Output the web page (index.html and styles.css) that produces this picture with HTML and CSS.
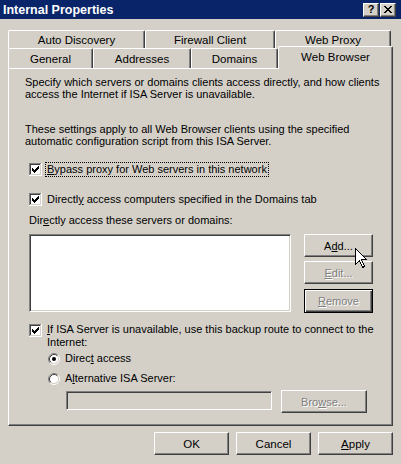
FILE: index.html
```html
<!DOCTYPE html>
<html>
<head>
<meta charset="utf-8">
<link rel="stylesheet" href="styles.css">
</head>
<body>
<div class="window">
  <div class="titlebar">
    <span class="title">Internal Properties</span>
    <div class="tbtns">
      <span class="tbtn help">?</span>
      <span class="tbtn close">
        <svg width="8" height="7" viewBox="0 0 8 7" shape-rendering="crispEdges"><path d="M0 0h2v1h-2zM6 0h2v1h-2zM1 1h2v1h-2zM5 1h2v1h-2zM2 2h4v1h-4zM3 3h2v1h-2zM2 4h4v1h-4zM1 5h2v1h-2zM5 5h2v1h-2zM0 6h2v1h-2zM6 6h2v1h-2z" fill="#000"/></svg>
      </span>
    </div>
  </div>
  <div class="main">
    <div class="tabrow back">
      <div class="tab w-auto">Auto Discovery</div>
      <div class="tab w-fw">Firewall Client</div>
      <div class="tab w-wp">Web Proxy</div>
    </div>
    <div class="tabrow front">
      <div class="tab w-gen">General</div>
      <div class="tab w-addr">Addresses</div>
      <div class="tab w-dom">Domains</div>
      <div class="tab w-wb sel">Web Browser</div>
    </div>
    <div class="panel">
      <p class="para">Specify which servers or domains clients access directly, and how clients<br>access the Internet if ISA Server is unavailable.</p>
      <p class="para para2">These settings apply to all Web Browser clients using the specified<br>automatic configuration script from this ISA Server.</p>
      <div class="check row-c1">
        <svg class="cb" width="13" height="13" viewBox="0 0 13 13" shape-rendering="crispEdges"><rect width="13" height="13" fill="#fff"/><path d="M0 0h12v1h-12zM0 1h1v11h-1z" fill="#808080"/><path d="M1 1h10v1h-10zM1 2h1v9h-1z" fill="#404040"/><path d="M1 11h11v1h-11zM11 1h1v10h-1z" fill="#d4d0c8"/><path d="M9 3h1v1h-1zM8 4h2v1h-2zM3 5h1v1h-1zM7 5h3v1h-3zM3 6h2v1h-2zM6 6h3v1h-3zM3 7h5v1h-5zM4 8h3v1h-3zM5 9h1v1h-1z" fill="#000"/></svg>
        <span class="lbl focus"><u>B</u>ypass proxy for Web servers in this network</span>
      </div>
      <div class="check row-c2">
        <svg class="cb" width="13" height="13" viewBox="0 0 13 13" shape-rendering="crispEdges"><rect width="13" height="13" fill="#fff"/><path d="M0 0h12v1h-12zM0 1h1v11h-1z" fill="#808080"/><path d="M1 1h10v1h-10zM1 2h1v9h-1z" fill="#404040"/><path d="M1 11h11v1h-11zM11 1h1v10h-1z" fill="#d4d0c8"/><path d="M9 3h1v1h-1zM8 4h2v1h-2zM3 5h1v1h-1zM7 5h3v1h-3zM3 6h2v1h-2zM6 6h3v1h-3zM3 7h5v1h-5zM4 8h3v1h-3zM5 9h1v1h-1z" fill="#000"/></svg>
        <span class="lbl">Directl<u>y</u> access computers specified in the Domains tab</span>
      </div>
      <div class="caption">Dir<u>e</u>ctly access these servers or domains:</div>
      <div class="listrow">
        <div class="listbox"></div>
        <div class="btncol">
          <div class="btn btn-add">A<u>d</u>d...</div>
          <div class="btn btn-edit disabled"><u>E</u>dit...</div>
          <div class="btn btn-remove default disabled"><u>R</u>emove</div>
        </div>
      </div>
      <div class="check row-c3">
        <svg class="cb" width="13" height="13" viewBox="0 0 13 13" shape-rendering="crispEdges"><rect width="13" height="13" fill="#fff"/><path d="M0 0h12v1h-12zM0 1h1v11h-1z" fill="#808080"/><path d="M1 1h10v1h-10zM1 2h1v9h-1z" fill="#404040"/><path d="M1 11h11v1h-11zM11 1h1v10h-1z" fill="#d4d0c8"/><path d="M9 3h1v1h-1zM8 4h2v1h-2zM3 5h1v1h-1zM7 5h3v1h-3zM3 6h2v1h-2zM6 6h3v1h-3zM3 7h5v1h-5zM4 8h3v1h-3zM5 9h1v1h-1z" fill="#000"/></svg>
        <span class="lbl"><u>I</u>f ISA Server is unavailable, use this backup route to connect to the<br>Internet:</span>
      </div>
      <div class="radio row-r1">
        <svg class="rb" width="12" height="12" viewBox="0 0 12 12"><circle cx="6" cy="6" r="4.5" fill="#fff"/><path d="M2.11 9.89A5.5 5.5 0 0 1 9.89 2.11" fill="none" stroke="#808080"/><path d="M9.89 2.11A5.5 5.5 0 0 1 2.11 9.89" fill="none" stroke="#fff"/><path d="M2.82 9.18A4.5 4.5 0 0 1 9.18 2.82" fill="none" stroke="#404040"/><path d="M9.18 2.82A4.5 4.5 0 0 1 2.82 9.18" fill="none" stroke="#d4d0c8"/><circle cx="6" cy="6" r="2" fill="#000"/></svg>
        <span class="lbl">Direc<u>t</u> access</span>
      </div>
      <div class="radio row-r2">
        <svg class="rb" width="12" height="12" viewBox="0 0 12 12"><circle cx="6" cy="6" r="4.5" fill="#fff"/><path d="M2.11 9.89A5.5 5.5 0 0 1 9.89 2.11" fill="none" stroke="#808080"/><path d="M9.89 2.11A5.5 5.5 0 0 1 2.11 9.89" fill="none" stroke="#fff"/><path d="M2.82 9.18A4.5 4.5 0 0 1 9.18 2.82" fill="none" stroke="#404040"/><path d="M9.18 2.82A4.5 4.5 0 0 1 2.82 9.18" fill="none" stroke="#d4d0c8"/></svg>
        <span class="lbl">A<u>l</u>ternative ISA Server:</span>
      </div>
      <div class="fieldrow">
        <div class="field"></div>
        <div class="btn btn-browse disabled">Bro<u>w</u>se...</div>
      </div>
    </div>
    <div class="footer">
      <div class="btn fbtn">OK</div>
      <div class="btn fbtn">Cancel</div>
      <div class="btn fbtn"><u>A</u>pply</div>
    </div>
  </div>
  <svg class="cursor" width="13" height="21" viewBox="0 0 13 21" shape-rendering="crispEdges"><path d="M0.5 0.5V16.5L4.5 12.5L7.5 19.5L9.5 18.5L6.5 11.5H11.5Z" fill="#fff" stroke="#000"/></svg>
</div>
</body>
</html>
```
FILE: styles.css
```css
* { box-sizing: border-box; }
body {
  margin: 0;
  background: #d4d0c8;
  font-family: "Liberation Sans", Arial, sans-serif;
  font-size: 11px;
  color: #000;
}
u { text-decoration: underline; text-underline-offset: 1px; }
.window {
  width: 401px;
  height: 464px;
  position: relative;
  overflow: hidden;
  background: #d4d0c8;
}
.titlebar {
  height: 19px;
  background: #0a246a;
  display: flex;
  align-items: center;
  justify-content: space-between;
  padding: 0 5px 0 3px;
}
.title {
  color: #fff;
  font-weight: bold;
  font-size: 12.5px;
}
.tbtns { display: flex; gap: 1px; }
.tbtn {
  width: 16px;
  height: 14px;
  background: #d4d0c8;
  border: 1px solid;
  border-color: #fff #404040 #404040 #fff;
  box-shadow: inset -1px -1px #808080;
  display: flex;
  align-items: center;
  justify-content: center;
  font-weight: bold;
  font-size: 11px;
  line-height: 1;
}
.main { padding: 11px 8px 0 8px; }
.tabrow { display: flex; }
.tabrow.back { height: 18px; }
.tabrow.front {
  height: 22px;
  margin-top: -2px;
  align-items: flex-start;
}
.tab {
  background: #d4d0c8;
  border-top: 1px solid #fff;
  border-left: 1px solid #fff;
  border-right: 1px solid #404040;
  box-shadow: inset -1px 0 #808080;
  border-radius: 2px 2px 0 0;
  display: flex;
  align-items: center;
  justify-content: center;
  white-space: nowrap;
  font-size: 11.5px;
}
.back .tab { height: 18px; }
.front .tab { height: 20px; margin-top: 2px; }
.front .tab.sel {
  height: 23px;
  margin-top: 0;
  padding-bottom: 3px;
  position: relative;
  z-index: 1;
}
.w-auto { width: 137px; }
.w-fw { width: 130px; }
.w-wp { width: 116px; }
.w-gen { width: 85px; }
.w-addr { width: 98px; }
.w-dom { width: 87px; }
.w-wb { width: 115px; }
.panel {
  width: 385px;
  height: 358px;
  border-top: 1px solid #fff;
  border-left: 1px solid #fff;
  border-right: 1px solid #404040;
  border-bottom: 1px solid #404040;
  box-shadow: inset -1px -1px #808080;
  padding: 7px 16px 0 16px;
}
.para {
  margin: 0;
  line-height: 12px;
  white-space: nowrap;
}
.para2 { margin-top: 23px; }
.check, .radio {
  display: flex;
  align-items: flex-start;
  line-height: 13px;
  white-space: nowrap;
}
.check { margin-left: 4px; gap: 4px; }
.cb { flex: none; display: block; }
.lbl { padding: 0 1px; }
.focus { outline: 1px dotted #000; outline-offset: 0; }
.row-c1 { margin-top: 16px; }
.row-c2 { margin-top: 17px; }
.caption {
  margin: 8px 0 0 4px;
  line-height: 13px;
}
.listrow {
  display: flex;
  gap: 13px;
  margin: 7px 0 0 4px;
  height: 79px;
}
.listbox {
  width: 262px;
  height: 78px;
  background: #fff;
  border-top: 1px solid #808080;
  border-left: 1px solid #808080;
  border-right: 1px solid #fff;
  border-bottom: 1px solid #fff;
  box-shadow: inset 1px 1px #404040, inset -1px -1px #d4d0c8;
}
.btncol {
  display: flex;
  flex-direction: column;
  gap: 4px;
  width: 69px;
}
.btn {
  background: #d4d0c8;
  border-top: 1px solid #fff;
  border-left: 1px solid #fff;
  border-right: 1px solid #404040;
  border-bottom: 1px solid #404040;
  box-shadow: inset -1px -1px #808080;
  display: flex;
  align-items: center;
  justify-content: center;
  height: 23px;
  white-space: nowrap;
}
.btn.default {
  border: 1px solid #000;
  box-shadow: inset 1px 1px #fff, inset -1px -1px #404040, inset -2px -2px #808080;
  height: 24px;
  margin-top: 1px;
}
.disabled {
  color: #808080;
  text-shadow: 1px 1px 0 #fff;
}
.row-c3 { margin-top: 10px; }
.row-c3 .cb { margin-top: 1px; }
.radio { margin-left: 23px; gap: 4px; }
.rb { flex: none; display: block; margin-top: 1px; }
.row-r1 { margin-top: 3px; }
.row-r2 { margin-top: 7px; }
.fieldrow {
  display: flex;
  gap: 9px;
  margin: 5px 0 0 41px;
  align-items: flex-start;
}
.field {
  width: 206px;
  height: 19px;
  margin-top: 1px;
  background: #d4d0c8;
  border-top: 1px solid #808080;
  border-left: 1px solid #808080;
  border-right: 1px solid #fff;
  border-bottom: 1px solid #fff;
  box-shadow: inset 1px 1px #404040, inset -1px -1px #d4d0c8;
}
.btn-browse { width: 86px; }
.footer {
  display: flex;
  justify-content: flex-end;
  gap: 7px;
  margin-top: 6px;
}
.fbtn { width: 75px; font-size: 11.5px; }
.cursor {
  position: absolute;
  left: 355px;
  top: 248px;
}
```
